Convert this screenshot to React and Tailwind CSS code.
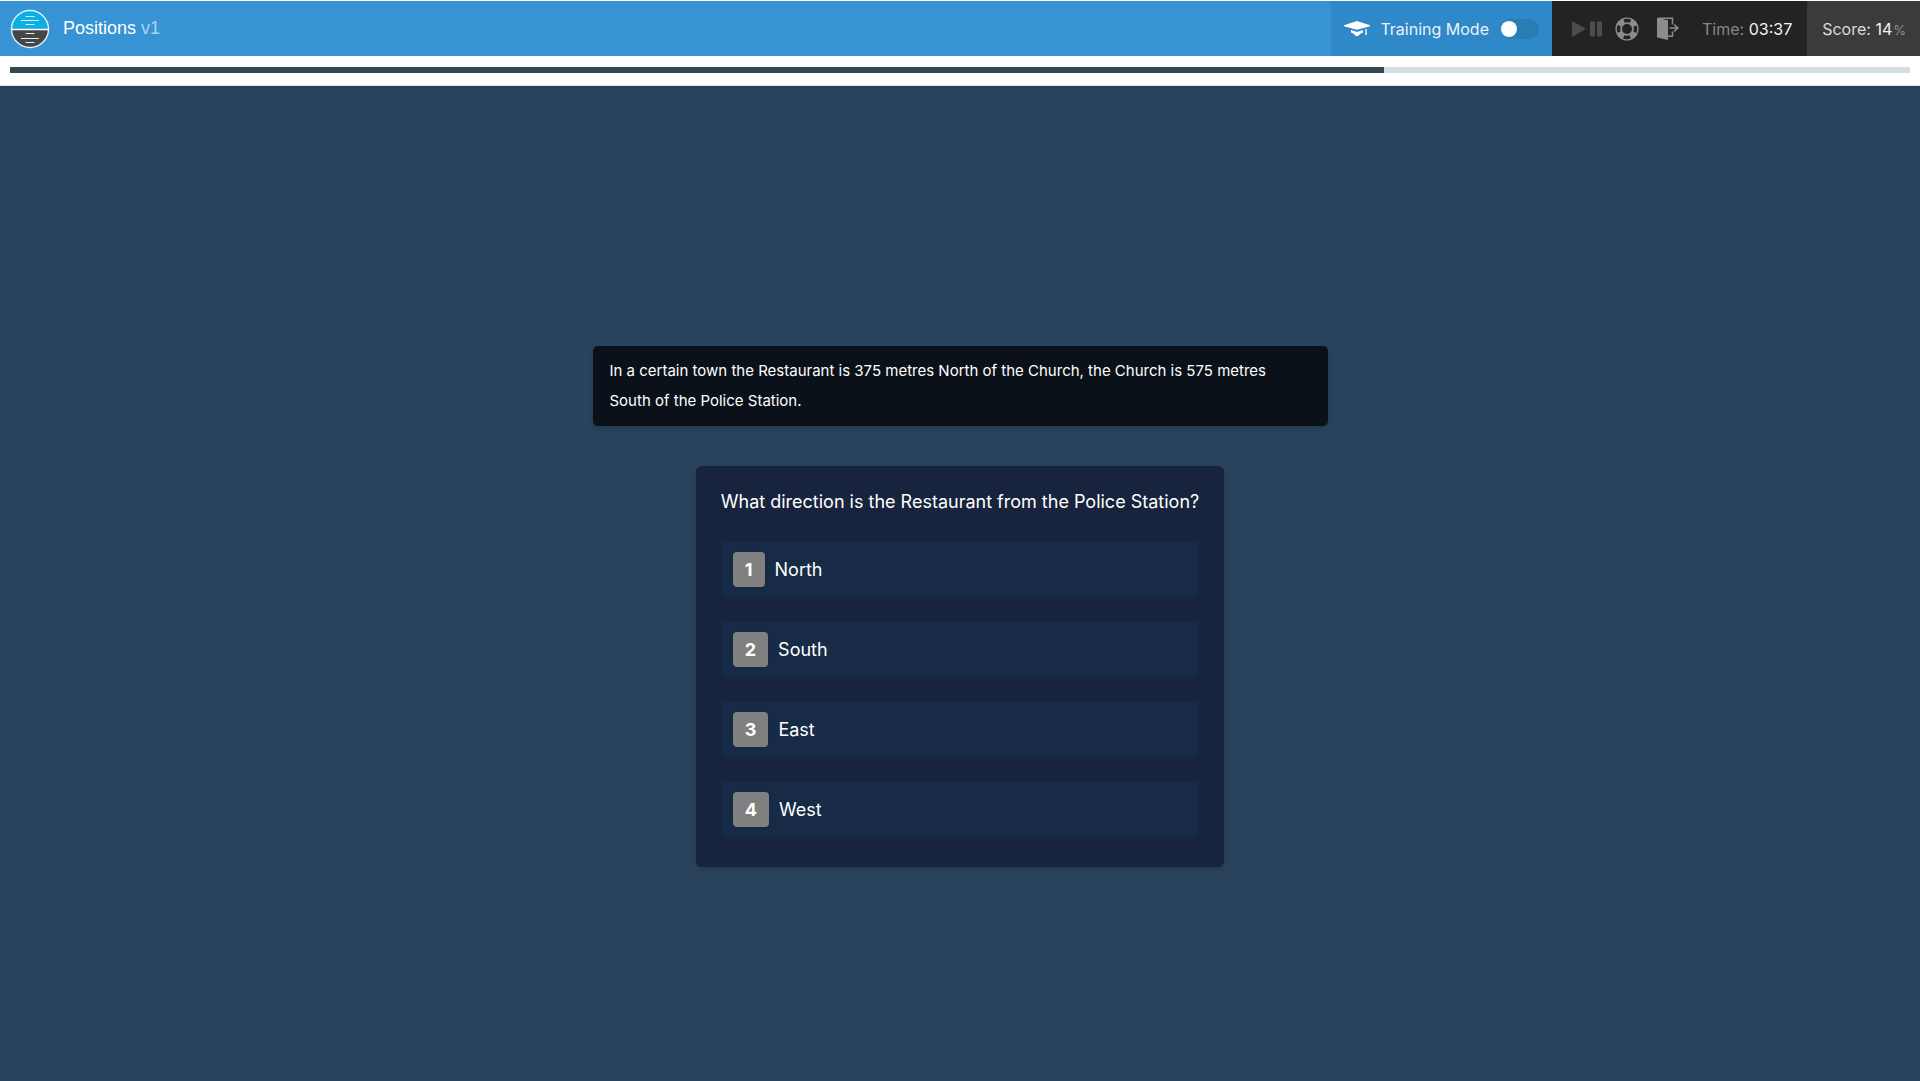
import React, { useState } from 'react';

const PROGRESS = (1374 / 1900) * 100;

const OPTIONS = [
  { id: 1, label: 'North' },
  { id: 2, label: 'South' },
  { id: 3, label: 'East' },
  { id: 4, label: 'West' },
];

function Logo() {
  return (
    <svg className="w-10 h-10 shrink-0" viewBox="0 0 40 40" aria-hidden="true">
      <path d="M1.5 19.5a18.5 18.5 0 0 1 37 0z" fill="#0bb0e2" />
      <path d="M1.5 20.5a18.5 18.5 0 0 0 37 0z" fill="#454545" />
      <circle cx="20" cy="20" r="18.5" fill="none" stroke="#e4f1fa" strokeWidth="1.4" />
      <path d="M1.5 20.500h37" stroke="#fff" strokeWidth="1.4" />
      <g stroke="#d9f1fa" strokeWidth="1">
        <path d="M15.500 7.500h9M11 11.500h18M15.500 15.500h9" />
        <path d="M15.500 24.500h9M11 29.500h18M15.500 33.500h9" />
      </g>
    </svg>
  );
}

function CapIcon() {
  return (
    <svg className="w-[26px] h-4 shrink-0" viewBox="0 0 26 16" fill="#fff" aria-hidden="true">
      <path d="M13 0 26 4.300v.9L13 8.800 0 5.200v-.9z" />
      <path d="M7 9 13 10.900 19 9v2.500c-1.500.5-3 1.500-4 2.700-1.200 1.200-2.800 1.200-4 0-1-1.200-2.500-2.200-4-2.700z" />
      <path d="M21.300 8.300l1.400-.5v6.200h-1.400z" />
    </svg>
  );
}

function PlayPauseIcon() {
  return (
    <svg className="w-[30px] h-4" viewBox="0 0 30 16" fill="#4c4c4c" aria-hidden="true">
      <path d="M0 1.500Q0 0 1.500.7L12.500 7Q13.700 8 12.500 9L1.500 15.300Q0 16 0 14.500z" />
      <rect x="18" y="0.500" width="5" height="15" rx="0.800" />
      <rect x="25" y="0.500" width="5" height="15" rx="0.800" />
    </svg>
  );
}

function HelpIcon() {
  return (
    <svg className="w-6 h-6" viewBox="0 0 24 24" fill="none" aria-hidden="true">
      <circle cx="12" cy="12" r="8.300" stroke="#8c8c8c" strokeWidth="6.600" />
      <circle
        cx="12"
        cy="12"
        r="8.500"
        stroke="#232323"
        strokeWidth="3.400"
        strokeDasharray="6.676 6.676"
        strokeDashoffset="3.338"
      />
    </svg>
  );
}

function ExitIcon() {
  return (
    <svg className="w-[22px] h-[23px]" viewBox="0 0 22 23" aria-hidden="true">
      <path d="M1 1.300h14.500v6M15.500 14.500v4.700h-4.500" fill="none" stroke="#8c8c8c" strokeWidth="1.500" />
      <path d="M0 .8 11 3.200V23L0 20.500z" fill="#8c8c8c" />
      <path d="M12.500 11h7.500M17 7.500l3.800 3.500-3.800 3.500" fill="none" stroke="#8c8c8c" strokeWidth="1.600" />
    </svg>
  );
}

function TopBar({ training, onToggleTraining }) {
  return (
    <header className="flex h-[55px] bg-[#3793d3] text-white">
      <div className="flex flex-1 items-center gap-[13px] pl-[10px]">
        <Logo />
        <h1 className="pb-[2px] font-['Liberation_Sans',sans-serif] text-lg">
          Positions <span className="text-[#afd4ed]">v1</span>
        </h1>
      </div>

      <label className="flex items-center bg-[#2f88c7] px-[13px] cursor-pointer">
        <CapIcon />
        <span className="ml-[10px] mr-3 pt-px text-[#eaf3f9]">Training Mode</span>
        <input
          type="checkbox"
          role="switch"
          checked={training}
          onChange={onToggleTraining}
          className="h-5 w-[38px] appearance-none rounded-full bg-[#297db5] cursor-pointer before:block before:h-4 before:w-4 before:translate-y-[2px] before:rounded-full before:bg-white checked:before:translate-x-5"
        />
      </label>

      <div className="flex items-center bg-[#232323] pl-5 pr-[15px]">
        <button type="button" aria-label="Play or pause" className="cursor-pointer">
          <PlayPauseIcon />
        </button>
        <button type="button" aria-label="Help" className="ml-[13px] cursor-pointer">
          <HelpIcon />
        </button>
        <button type="button" aria-label="Exit" className="ml-[18px] cursor-pointer">
          <ExitIcon />
        </button>
        <p className="ml-[23px] pt-px text-[#868686]">
          Time: <span className="text-[#f3f3f3]">03:37</span>
        </p>
      </div>

      <div className="flex items-center bg-[#3b3b3b] pl-[15px] pr-[14px]">
        <p className="pt-px text-[#dcdcdc]">
          Score: <span className="text-[#f3f3f3]">14</span>
          <span className="ml-px text-[13px] text-[#8e8e8e]">%</span>
        </p>
      </div>
    </header>
  );
}

export default function App() {
  const [training, setTraining] = useState(false);
  const [selected, setSelected] = useState(null);

  return (
    <div className="flex min-h-screen flex-col bg-[#29435c] font-['Inter',sans-serif] text-base">
      <div className="border-b border-[#dfe5e8] bg-white pt-px">
        <TopBar training={training} onToggleTraining={() => setTraining(!training)} />
        {/* Progress */}
        <div className="px-[10px] pt-[11px] pb-3">
          <div className="h-[6px] bg-[#d3dfe4]">
            <div className="h-full bg-[#36474f]" style={{ width: `${PROGRESS}%` }}></div>
          </div>
        </div>
      </div>

      <main className="flex flex-1 flex-col items-center justify-center gap-10 px-4 pt-[46px] text-white">
        {/* Passage */}
        <p className="w-full max-w-[735px] rounded-[5px] bg-[#0a1118] px-[17px] py-[10px] text-[15px] leading-[30px] shadow-md">
          In a certain town the Restaurant is 375 metres North of the Church, the Church is 575 metres South of the Police Station.
        </p>

        {/* Question */}
        <section className="rounded-md bg-[#18233d] px-[25px] pt-5 pb-[30px] text-lg shadow-md">
          <h2 className="leading-8">What direction is the Restaurant from the Police Station?</h2>
          <div className="mt-6 flex flex-col gap-[25px]">
            {OPTIONS.map((o) => (
              <button
                key={o.id}
                type="button"
                aria-pressed={selected === o.id}
                onClick={() => setSelected(o.id)}
                className="flex items-center gap-[10px] rounded bg-[#182b46] px-3 py-[10px] cursor-pointer"
              >
                <span className="rounded bg-[#808080] px-3 font-bold leading-[35px] shadow-sm">{o.id}</span>
                <span>{o.label}</span>
              </button>
            ))}
          </div>
        </section>
      </main>
    </div>
  );
}
